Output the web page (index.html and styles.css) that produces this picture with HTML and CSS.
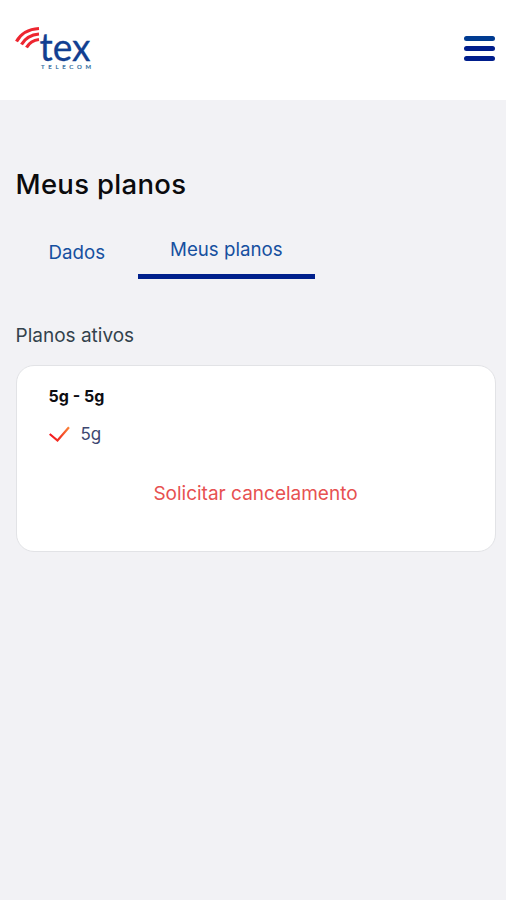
FILE: index.html
```html
<!DOCTYPE html>
<html lang="pt-BR">
<head>
<meta charset="utf-8">
<meta name="viewport" content="width=device-width, initial-scale=1">
<title>Meus planos</title>
<link rel="stylesheet" href="styles.css">
</head>
<body>
<header class="header">
  <svg class="logo" width="78" height="48" viewBox="0 0 78 48">
    <g class="waves">
      <path d="M1.500 17.500Q8 5.500 24 4.500"/>
      <path d="M6.500 20.500Q12 11 24 10"/>
      <path d="M11.500 23.500Q15.500 16.500 24 15.500"/>
    </g>
    <text class="wordmark" x="24.500" y="37" textLength="51" lengthAdjust="spacingAndGlyphs">tex</text>
    <text class="tagline" x="26" y="45" textLength="50">TELECOM</text>
  </svg>
  <button class="menu" aria-label="Menu"><span></span><span></span><span></span></button>
</header>
<main class="content">
  <h1 class="title">Meus planos</h1>
  <nav class="tabs">
    <a class="tab">Dados</a>
    <a class="tab tab-active">Meus planos</a>
  </nav>
  <h2 class="subtitle">Planos ativos</h2>
  <section class="card">
    <h3 class="plan-name">5g - 5g</h3>
    <div class="feature">
      <svg width="22" height="16" viewBox="0 0 22 16">
        <defs><linearGradient id="tick" x1="0" y1="0" x2="1" y2="0"><stop offset="0" stop-color="#f5141f"/><stop offset=".5" stop-color="#f23324"/><stop offset="1" stop-color="#fb8335"/></linearGradient></defs>
        <path d="M.700 8L8.500 14.500L20 1.200" fill="none" stroke="url(#tick)" stroke-width="2.200"/>
      </svg>
      <span>5g</span>
    </div>
    <button class="cancel">Solicitar cancelamento</button>
  </section>
</main>
</body>
</html>
```
FILE: styles.css
```css
* { box-sizing: border-box; }
body { margin: 0; min-height: 900px; background: #f2f2f5; font-family: Inter, "Liberation Sans", sans-serif; }
h1, h2, h3 { margin: 0; }
button { border: 0; padding: 0; background: none; font: inherit; }
.header { height: 100px; padding: 0 11px 4px 15px; display: flex; align-items: center; justify-content: space-between; background: #fff; }
.logo { overflow: visible; }
.waves { fill: none; stroke: #ed2630; stroke-width: 3.200; }
.wordmark { font: 400 38.5px Lato, sans-serif; fill: #123f91; stroke: #123f91; stroke-width: .3px; }
.tagline { font: 400 6px Lato, sans-serif; fill: #2c6a9e; stroke: #2c6a9e; stroke-width: .2px; }
.menu { width: 31px; display: flex; flex-direction: column; gap: 5px; }
.menu span { height: 5px; border-radius: 3px; background: #001e8c; }
.menu span:first-child { background: #003b91; }
.content { padding: 64px 10.5px 0 15.5px; }
.title { height: 40px; line-height: 40px; font-size: 27.5px; font-weight: 500; letter-spacing: .3px; color: #0b0b0d; }
.tabs { margin-top: 26px; height: 49px; display: flex; align-items: flex-start; }
.tab { padding: 11px 33px 0; font-size: 18.7px; line-height: 24px; color: #1650a0; }
.tab-active { height: 49px; padding: 8px 32px 0; border-bottom: 5px solid #00208c; }
.subtitle { margin-top: 43px; height: 28px; line-height: 28px; font-size: 19px; font-weight: 400; color: #33424c; }
.card { margin-top: 15px; height: 187px; padding: 18px 32px; background: #fff; border: 1px solid #e2e3e6; border-radius: 18px; }
.plan-name { height: 24px; line-height: 24px; font-size: 16px; font-weight: 700; color: #0d0d12; }
.feature { height: 24px; margin-top: 14px; display: flex; align-items: center; gap: 10px; font-size: 17px; color: #3d4770; }
.cancel { display: block; margin: 36px auto 0; line-height: 24px; font-size: 19px; color: #e75151; }
```
